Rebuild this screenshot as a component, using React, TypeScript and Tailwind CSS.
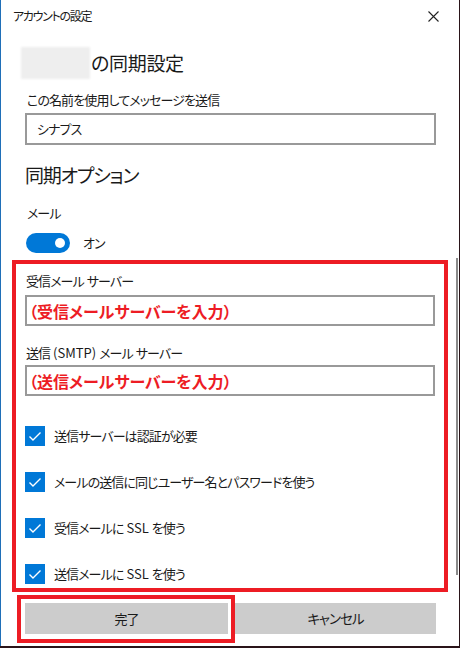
import React from 'react';

const jp = "font-['Noto_Sans_CJK_JP','Noto_Sans',sans-serif] [font-feature-settings:'palt']";
const body = 'text-[13px] tracking-[-0.9px]';

// 英字と空白の部分だけ字間を戻す
function Txt({ children }: { children: string }) {
    return (
        <>
            {children.split(/([ A-Za-z()]+)/).map((part, i) =>
                /[ A-Za-z()]/.test(part) ? (
                    <span key={i} className="tracking-[0px] whitespace-pre">{part}</span>
                ) : (
                    <React.Fragment key={i}>{part}</React.Fragment>
                )
            )}
        </>
    );
}

function Check() {
    return (
        <div className="w-[20px] h-[20px] bg-[#0078d7] flex items-center justify-center shrink-0">
            <svg width="20" height="20" viewBox="0 0 20 20" fill="none">
                <path d="M4.5 10.5 L8 14 L15.5 6.5" stroke="white" strokeWidth="1.4" />
            </svg>
        </div>
    );
}

function CheckRow({ label, className }: { label: string; className?: string }) {
    return (
        <div className={`flex items-center h-[20px] ml-[9px] ${className ?? ''}`}>
            <Check />
            <span className={`ml-[9px] ${body} leading-[20px] text-[#1a1a1a]`}>
                <Txt>{label}</Txt>
            </span>
        </div>
    );
}

export default function App() {
    return (
        <div className={`w-[460px] h-[648px] bg-[#2a1419] ${jp}`}>
            <div className="w-[459px] h-[646px] bg-white border-l border-[#1f6fb8] flex flex-col text-[#1a1a1a]">
                {/* タイトルバー */}
                <div className="h-[32px] flex items-center justify-between pl-[12px] pr-[20px] shrink-0">
                    <span className="text-[12px] tracking-[-1.3px] leading-[16px]">アカウントの設定</span>
                    <svg width="11" height="11" viewBox="0 0 11 11">
                        <path d="M0.5 0.5 L10.5 10.5 M10.5 0.5 L0.5 10.5" stroke="#222" strokeWidth="1.1" />
                    </svg>
                </div>

                {/* 見出し */}
                <div className="mt-[15px] h-[32px] flex items-center">
                    <div className="ml-[20px] w-[69px] h-[32px] bg-[#eeeeee] blur-[1px]" />
                    <span className="ml-[1px] text-[19px] tracking-[-0.3px] leading-[32px]">の同期設定</span>
                </div>

                <div className={`mt-[11px] h-[20px] pl-[26px] ${body} leading-[20px]`}>この名前を使用してメッセージを送信</div>
                <div className={`mt-[3px] ml-[24px] w-[411px] h-[32px] border-2 border-[#999999] pl-[10px] flex items-center ${body}`}>
                    シナプス
                </div>

                <div className="mt-[15px] h-[30px] pl-[24px] text-[19px] tracking-[-1.2px] leading-[30px]">同期オプション</div>
                <div className={`mt-[13px] h-[20px] pl-[26px] ${body} leading-[20px]`}>メール</div>

                {/* トグル */}
                <div className="mt-[10px] h-[20px] flex items-center pl-[25px]">
                    <div className="w-[44px] h-[20px] rounded-full bg-[#0078d7] flex items-center justify-end pr-[5px]">
                        <div className="w-[10px] h-[10px] rounded-full bg-white" />
                    </div>
                    <span className={`ml-[13px] ${body} leading-[20px]`}>オン</span>
                </div>

                {/* サーバー設定 (赤枠) */}
                <div className="mt-[7px] flex items-start">
                    <div className="ml-[11px] w-[436px] h-[332px] border-4 border-[#ed1c24] overflow-hidden flex flex-col">
                        <div className={`mt-[7px] h-[20px] pl-[10px] ${body} leading-[20px]`}>
                            <Txt>受信メール サーバー</Txt>
                        </div>
                        <div className="mt-[4px] ml-[9px] w-[410px] h-[31px] border-2 border-[#999999] pl-[2px] flex items-center text-[16px] font-bold text-[#ed1c24]">
                            （受信メールサーバーを入力）
                        </div>
                        <div className={`mt-[17px] h-[20px] pl-[10px] ${body} leading-[20px]`}>
                            <Txt>送信 (SMTP) メール サーバー</Txt>
                        </div>
                        <div className="mt-[2px] ml-[9px] w-[410px] h-[31px] border-2 border-[#999999] pl-[2px] flex items-center text-[16px] font-bold text-[#ed1c24]">
                            （送信メールサーバーを入力）
                        </div>
                        <CheckRow className="mt-[30px] shrink-0" label="送信サーバーは認証が必要" />
                        <CheckRow className="mt-[26px] shrink-0" label="メールの送信に同じユーザー名とパスワードを使う" />
                        <CheckRow className="mt-[26px] shrink-0" label="受信メールに SSL を使う" />
                        <CheckRow className="mt-[26px] shrink-0" label="送信メールに SSL を使う" />
                    </div>
                    {/* スクロールバー */}
                    <div className="ml-[8px] -mt-[2px] w-[2px] h-[317px] bg-[#8a8a8a]" />
                </div>

                {/* ボタン */}
                <div className="mt-[3px] flex items-start">
                    <div className="ml-[16px] w-[218px] h-[48px] border-4 border-[#ed1c24] pl-[4px] pt-[4px]">
                        <div className={`w-[203px] h-[31px] bg-[#cccccc] flex items-center justify-center ${body}`}>完了</div>
                    </div>
                    <div className="mt-[8px] w-[201px] h-[31px] bg-[#cccccc] flex items-center justify-center text-[13.5px] tracking-[-1px]">キャンセル</div>
                </div>
            </div>
        </div>
    );
}
